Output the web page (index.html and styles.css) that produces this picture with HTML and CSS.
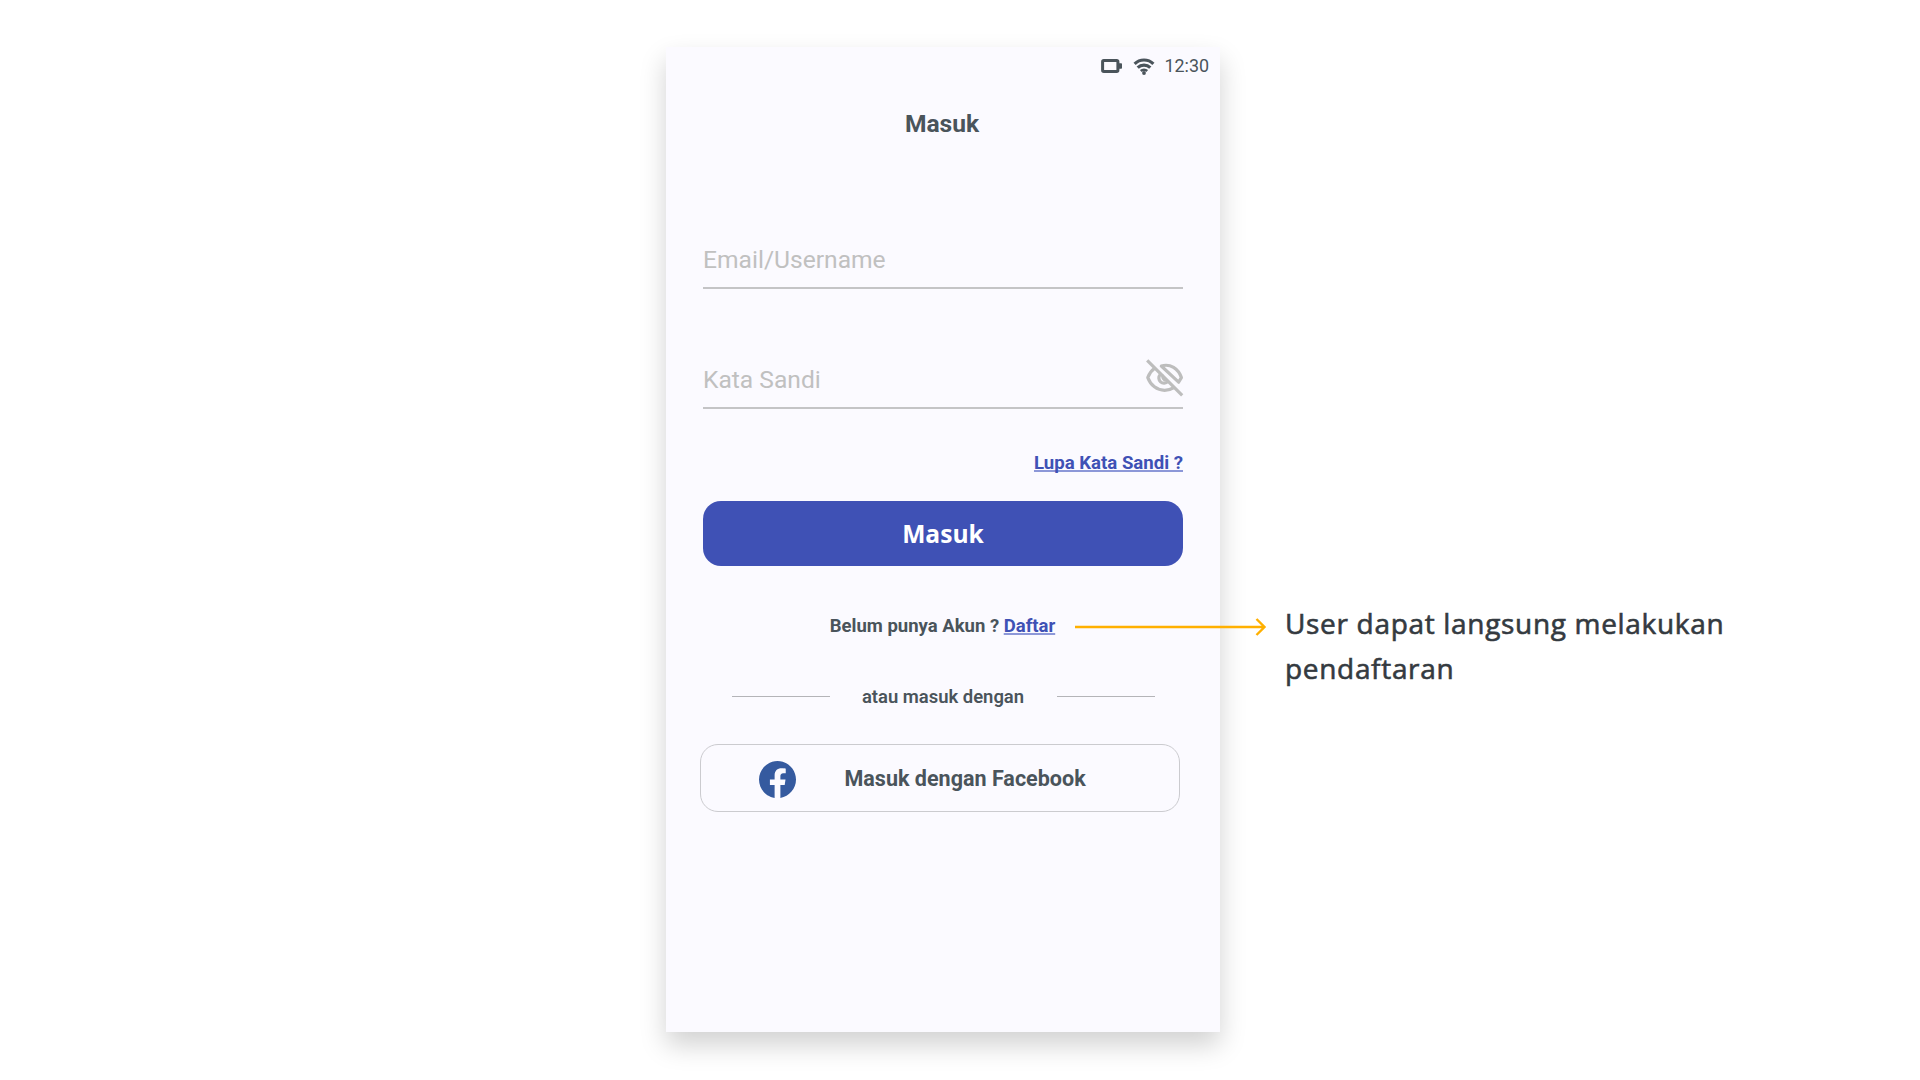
FILE: index.html
```
<!DOCTYPE html>
<html lang="id">
<head>
<meta charset="utf-8">
<title>Masuk</title>
<link rel="stylesheet" href="styles.css">
</head>
<body>
<main class="stage">
  <section class="phone">
    <div class="status">
      <svg class="battery" width="22" height="14" viewBox="0 0 22 14"><rect x="1.6" y="1.6" width="15.3" height="10.8" rx="1.2" fill="none" stroke="#4a545b" stroke-width="3"/><path d="M18 4.3h2.2a.8.8 0 0 1 .8.8v3.8a.8.8 0 0 1-.8.8H18z" fill="#4a545b"/></svg>
      <svg class="wifi" width="22" height="17" viewBox="0 0 22 17"><g fill="none" stroke="#4a545b" stroke-width="3.1"><path d="M1.6 5.9a13.3 13.3 0 0 1 18.8 0"/><path d="M4.7 9.7a8.9 8.9 0 0 1 12.6 0"/><path d="M7.8 13a4.5 4.5 0 0 1 6.4 0" stroke-width="2.5"/></g><circle cx="11" cy="15" r="1.9" fill="#4a545b"/></svg>
      <span class="clock">12:30</span>
    </div>
    <h1 class="title">Masuk</h1>
    <form class="form">
      <div class="field"><span>Email/Username</span></div>
      <div class="field">
        <span>Kata Sandi</span>
        <svg class="eye" width="38" height="38" viewBox="0 0 38 38"><g fill="none" stroke="#bdbdbd" stroke-width="3.2" stroke-linejoin="round"><path d="M1.2 1.3 36.2 36.3"/><path d="M8.6 9.3C5.3 11.7 3 15 1.8 18.6 4.6 26.2 11 31.3 18.6 31.3c3.4 0 6.6-1 9.3-2.7"/><path d="M15.3 7C24.3 4.2 32.3 9.8 35.4 18.6L32.6 23.2Z"/><path d="M14.2 15.5a5.2 5.2 0 1 0 7.7 7"/><path d="M18 16.6a2 2 0 0 0 2.5 3.6"/></g></svg>
      </div>
      <a class="link forgot">Lupa Kata Sandi ?</a>
      <div class="submit">Masuk</div>
    </form>
    <p class="signup">Belum punya Akun ? <a class="link">Daftar</a></p>
    <div class="divider"><span>atau masuk dengan</span></div>
    <div class="facebook">
      <svg class="fb" width="37" height="37" viewBox="0 0 24 24"><path fill="#355a9f" d="M24 12.073c0-6.627-5.373-12-12-12s-12 5.373-12 12c0 5.99 4.388 10.954 10.125 11.854v-8.385H7.078v-3.47h3.047V9.43c0-3.007 1.792-4.669 4.533-4.669 1.312 0 2.686.235 2.686.235v2.953H15.83c-1.491 0-1.956.925-1.956 1.874v2.25h3.328l-.532 3.47h-2.796v8.385C19.612 23.027 24 18.062 24 12.073z"/></svg>
      <span>Masuk dengan Facebook</span>
    </div>
  </section>
  <p class="note">User dapat langsung melakukan pendaftaran</p>
  <svg class="arrow" width="194" height="20" viewBox="0 0 194 20"><path d="M0 10H189M181.500 2 189.500 10 181.500 18" fill="none" stroke="#ffb000" stroke-width="2.4"/></svg>
</main>
</body>
</html>
```
FILE: styles.css
```
* { box-sizing: border-box; }
body { margin: 0; background: #fff; }
h1, p { margin: 0; }

.stage {
  position: relative;
  display: flex;
  align-items: flex-start;
  width: 1920px;
  height: 1080px;
  padding: 47px 0 0 666px;
  overflow: hidden;
  font-family: Roboto, sans-serif;
  color: #4a545b;
}

.phone {
  display: flex;
  flex-direction: column;
  width: 554px;
  height: 985px;
  padding: 8px 37px 0;
  background: #fbfaff;
  box-shadow: 0 13px 25px rgba(0, 0, 0, .18);
}

.status {
  display: flex;
  align-items: center;
  justify-content: flex-end;
  height: 22px;
  margin-right: -26px;
}
.battery { margin-right: 10px; }
.wifi { margin-right: 9px; }
.clock { font-size: 17.9px; line-height: 22px; }

.title {
  margin-top: 32px;
  font-size: 24.6px;
  font-weight: 700;
  line-height: 30px;
  text-align: center;
  transform: translateX(-1px);
}

.form {
  display: flex;
  flex-direction: column;
  padding-top: 75px;
}
.field {
  display: flex;
  align-items: center;
  justify-content: space-between;
  height: 75px;
  padding-top: 18px;
  border-bottom: 2px solid #c4c4c6;
  font-size: 24.6px;
  color: #c0c0c0;
}
.field + .field { margin-top: 45px; }
.eye { margin-top: -3px; margin-right: -1px; }

.link {
  color: #3f51b5;
  text-decoration: underline;
  text-decoration-color: #8c97d8;
  text-decoration-thickness: 1.5px;
  text-underline-offset: 1px;
  text-decoration-skip-ink: none;
}
.forgot {
  align-self: flex-end;
  margin-top: 43px;
  font-size: 18.6px;
  font-weight: 700;
  line-height: 22px;
}
.submit {
  height: 65px;
  margin-top: 27px;
  border-radius: 18px;
  background: #3f51b5;
  color: #fff;
  font: 700 24.6px/65px "Open Sans", sans-serif;
  text-align: center;
}

.signup {
  margin-top: 49px;
  padding-right: 1px;
  font-size: 18.5px;
  font-weight: 700;
  line-height: 22px;
  text-align: center;
}

.divider {
  display: flex;
  align-items: center;
  justify-content: space-between;
  height: 22px;
  margin: 48px 28px 0 29px;
  font-size: 18.46px;
  font-weight: 600;
}
.divider span { padding: 1px 1px 0 0; }
.divider::before, .divider::after {
  content: "";
  width: 98px;
  border-top: 1px solid #b4b4b8;
}

.facebook {
  display: flex;
  align-items: center;
  width: 480px;
  height: 68px;
  margin-top: 37px;
  margin-left: -3px;
  padding-left: 58px;
  border: 1px solid #cbcbcf;
  border-radius: 18px;
  font-size: 21.54px;
  font-weight: 700;
}
.fb { margin: 2px 48.5px 0 0; }

.note {
  width: 460px;
  margin: 554px 0 0 65px;
  color: #343a40;
  font: 400 28px/45px "Open Sans", sans-serif;
  letter-spacing: .68px;
  -webkit-text-stroke: .6px currentColor;
}

/* Callout line crossing from the sign-up link to the note */
.arrow {
  position: absolute;
  left: 1075px;
  top: 617px;
}
```
